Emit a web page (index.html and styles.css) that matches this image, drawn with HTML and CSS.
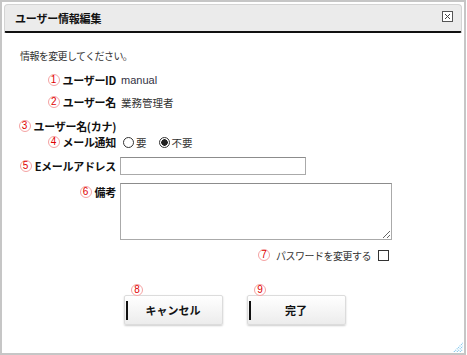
FILE: index.html
```html
<!DOCTYPE html>
<html lang="ja">
<head>
    <meta charset="UTF-8">
    <title>ユーザー情報編集</title>
    <link rel="stylesheet" href="styles.css">
</head>
<body>
    <div class="dialog">
        <div class="titlebar">
            <span class="title">ユーザー情報編集</span>
            <svg class="close" width="11" height="11" viewBox="0 0 11 11">
                <rect x="0.5" y="0.5" width="10" height="10" fill="#fff" stroke="#555"/>
                <path d="M3 3 L8 8 M8 3 L3 8" stroke="#444" stroke-width="1"/>
            </svg>
        </div>

        <div class="content">
            <p class="intro">情報を変更してください。</p>

            <div class="row r1">
                <div class="label"><span class="num">1</span>ユーザーID</div>
                <div class="value latin">manual</div>
            </div>
            <div class="row r2">
                <div class="label"><span class="num">2</span>ユーザー名</div>
                <div class="value">業務管理者</div>
            </div>
            <div class="row r3">
                <div class="label"><span class="num">3</span>ユーザー名(カナ)</div>
                <div class="value"></div>
            </div>
            <div class="row r4">
                <div class="label"><span class="num">4</span>メール通知</div>
                <div class="value radios">
                    <span class="radio"></span><span class="opt">要</span>
                    <span class="radio checked"></span><span class="opt">不要</span>
                </div>
            </div>
            <div class="row r5">
                <div class="label"><span class="num">5</span>Eメールアドレス</div>
                <input type="text" class="text-input">
            </div>
            <div class="row r6">
                <div class="label"><span class="num">6</span>備考</div>
                <textarea class="memo"></textarea>
            </div>

            <div class="pw-row">
                <span class="num">7</span>
                <span class="pw-text">パスワードを変更する</span>
                <span class="check"></span>
            </div>

            <div class="actions">
                <div class="btn-wrap">
                    <span class="num">8</span>
                    <div class="btn"><span class="bar"></span><span class="btn-text">キャンセル</span></div>
                </div>
                <div class="btn-wrap">
                    <span class="num">9</span>
                    <div class="btn"><span class="bar"></span><span class="btn-text">完了</span></div>
                </div>
            </div>
        </div>

        <svg class="grip" width="10" height="10" viewBox="0 0 10 10">
            <path d="M1 10 L10 1 M4 10 L10 4 M7 10 L10 7" stroke="#7cc4ec" stroke-width="1.2" stroke-dasharray="1 1"/>
        </svg>
    </div>
</body>
</html>
```

FILE: styles.css
```css
body {
    margin: 0;
    background: #fff;
    font-family: "Noto Sans CJK JP", "Noto Sans", sans-serif;
    color: #222;
}
.dialog {
    position: relative;
    width: 466px;
    height: 355px;
    box-sizing: border-box;
    border: 2px solid #c6c6c6;
    background: #fff;
}
.titlebar {
    margin: 2px 2px 0 2px;
    height: 26px;
    display: flex;
    align-items: center;
    justify-content: space-between;
    padding: 0 8px 0 10px;
    background: #ebebeb;
    border: 1px solid #d4d4d4;
    border-bottom: 2px solid #111;
    border-radius: 4px 4px 2px 2px;
}
.title {
    font-size: 11px;
    font-weight: bold;
    letter-spacing: -0.2px;
    color: #111;
}
.close {
    display: block;
    margin-top: -4px;
}
.intro {
    margin: 16px 0 0 18px;
    font-size: 10px;
    line-height: 14px;
    letter-spacing: -0.6px;
    color: #333;
}
.row {
    display: flex;
    align-items: center;
}
.label {
    width: 114px;
    flex: none;
    display: flex;
    justify-content: flex-end;
    align-items: center;
    font-size: 11px;
    font-weight: bold;
    letter-spacing: -0.3px;
    white-space: nowrap;
    color: #111;
}
.value {
    margin-left: 5px;
    font-size: 10.5px;
    color: #333;
}
.value.latin {
    font-family: "Liberation Sans", Arial, sans-serif;
    font-size: 11px;
    color: #334;
}
.num {
    display: inline-flex;
    align-items: center;
    justify-content: center;
    width: 10px;
    height: 10px;
    border: 1px solid #f5a3a3;
    border-radius: 50%;
    margin-right: 3px;
    font-family: "Liberation Sans", Arial, sans-serif;
    font-size: 10px;
    font-weight: normal;
    line-height: 1;
    color: #e00000;
    letter-spacing: 0;
}
.r1 {
    margin-top: 6px;
    height: 22px;
}
.r2 {
    height: 22px;
}
.r3 {
    margin-top: 5px;
    height: 16px;
}
.r4 {
    height: 16px;
}
.radios {
    display: flex;
    align-items: center;
    margin-left: 7px;
}
.radio {
    width: 9px;
    height: 9px;
    border: 1px solid #333;
    border-radius: 50%;
    margin-right: 2px;
}
.radio.checked {
    background: radial-gradient(circle, #222 0 3px, #fff 3.5px);
}
.opt {
    font-size: 10.5px;
    margin-right: 12px;
}
.r5 {
    margin-top: 7px;
    height: 18px;
}
.text-input {
    margin: 0 0 0 4px;
    width: 186px;
    height: 18px;
    box-sizing: border-box;
    border: 1px solid #aaa;
    border-top-color: #8c8c8c;
    padding: 0 3px;
    font-size: 11px;
}
.r6 {
    margin-top: 8px;
    align-items: flex-start;
}
.r6 .label {
    padding-top: 1px;
}
.memo {
    margin: 0 0 0 4px;
    width: 272px;
    height: 57px;
    box-sizing: border-box;
    border: 1px solid #aaa;
    border-top-color: #8c8c8c;
    resize: both;
    font-size: 11px;
}
.pw-row {
    margin-top: 7px;
    height: 16px;
    display: flex;
    align-items: center;
    justify-content: flex-end;
    padding-right: 75px;
}
.pw-row .num {
    margin-right: 6px;
}
.pw-text {
    font-size: 10px;
    letter-spacing: -0.5px;
    color: #333;
}
.check {
    width: 9px;
    height: 9px;
    margin-left: 7px;
    border: 1px solid #333;
}
.actions {
    margin-top: 21px;
    padding-left: 122px;
    display: flex;
    gap: 24px;
}
.btn-wrap {
    display: flex;
    flex-direction: column;
}
.btn-wrap .num {
    margin-left: 7px;
    margin-bottom: -1px;
    position: relative;
    background: #fff;
}
.btn {
    width: 99px;
    height: 30px;
    box-sizing: border-box;
    display: flex;
    align-items: center;
    background: linear-gradient(#ffffff, #ececec);
    border: 1px solid #dcdcdc;
    border-radius: 2px;
    box-shadow: 0 1px 2px rgba(0, 0, 0, 0.2);
}
.bar {
    width: 2px;
    height: 19px;
    margin-left: 1px;
    background: #111;
}
.btn-text {
    flex: 1;
    text-align: center;
    font-size: 11px;
    font-weight: bold;
    color: #111;
    padding-right: 4px;
}
.grip {
    position: absolute;
    right: 1px;
    bottom: 1px;
}
```
